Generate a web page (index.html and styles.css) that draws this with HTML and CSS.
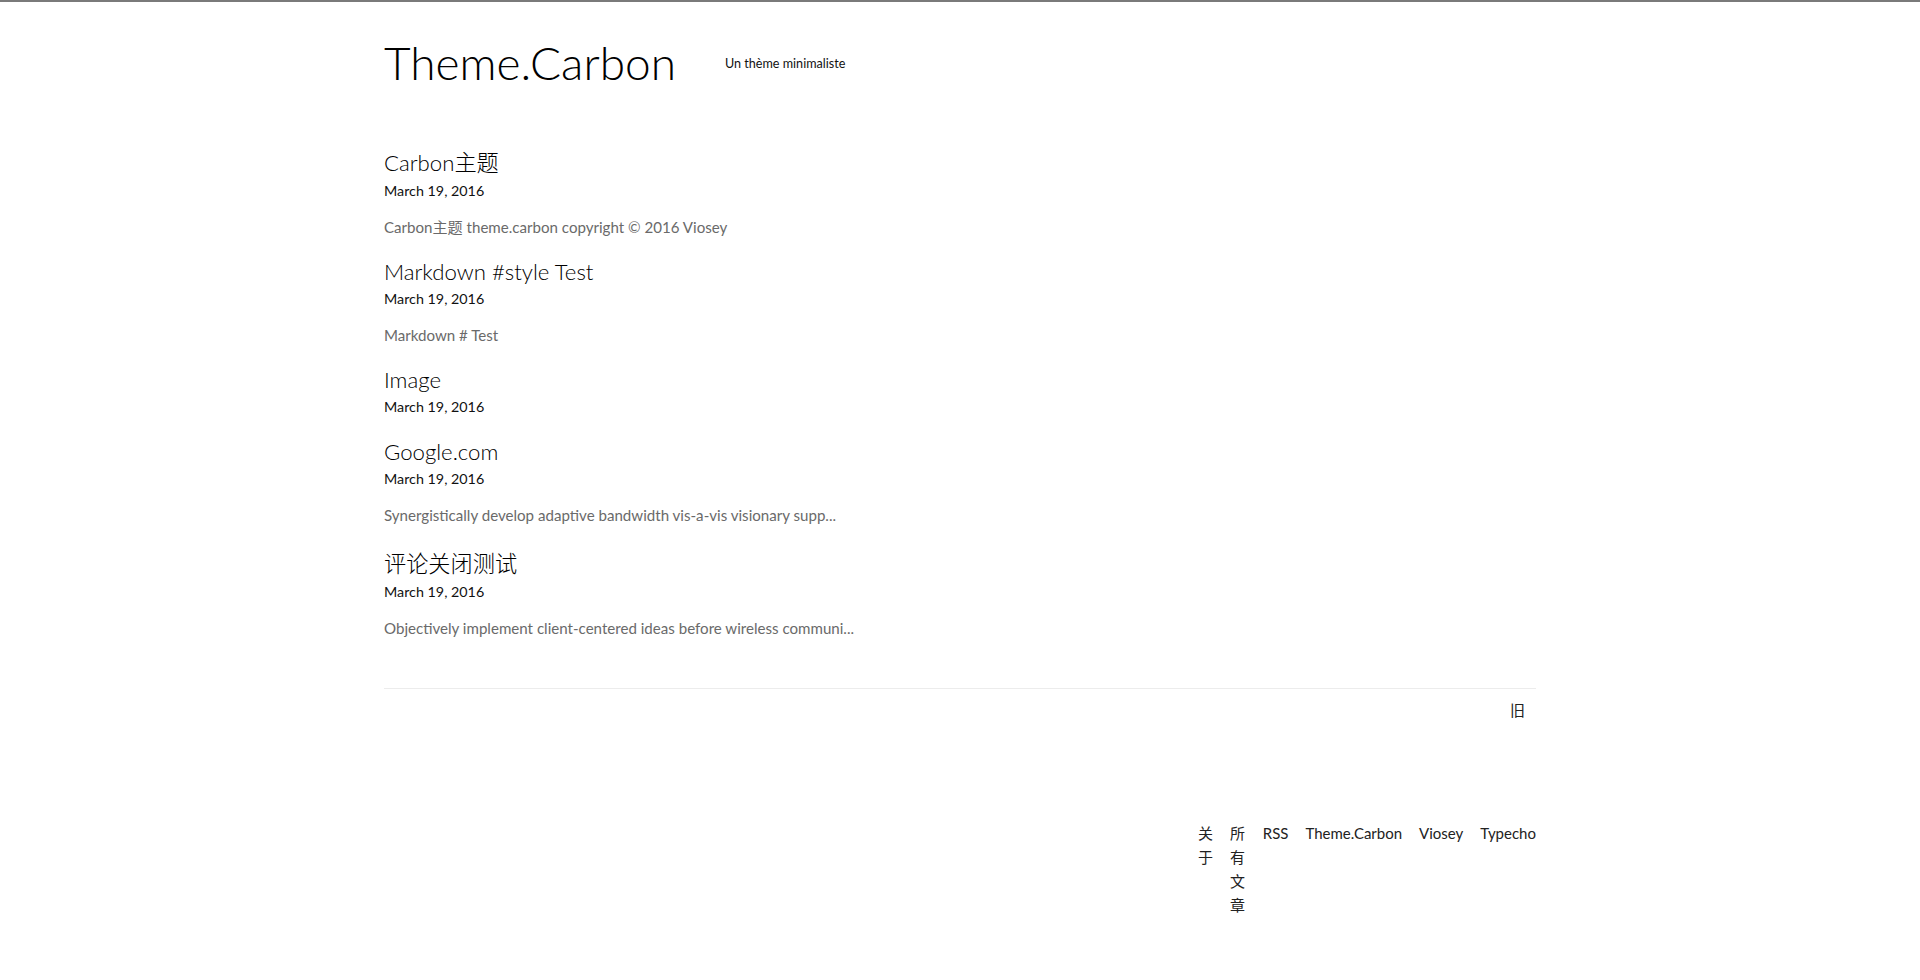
FILE: index.html
```html
<!DOCTYPE html>
<html lang="zh-CN">
<head>
    <meta charset="UTF-8">
    <meta name="viewport" content="width=device-width, initial-scale=1.0">
    <title>Theme.Carbon</title>
    <link rel="stylesheet" href="styles.css">
</head>
<body>

    <div class="container">
        <header class="site-header">
            <h1 class="site-title"><a href="#">Theme.Carbon</a></h1>
            <p class="site-desc">Un thème minimaliste</p>
        </header>

        <main class="post-list">
            <article class="post">
                <h2 class="post-title"><a href="#">Carbon主题</a></h2>
                <div class="post-date">March 19, 2016</div>
                <p class="post-excerpt">Carbon主题 theme.carbon copyright © 2016 Viosey</p>
            </article>
            <article class="post">
                <h2 class="post-title"><a href="#">Markdown #style Test</a></h2>
                <div class="post-date">March 19, 2016</div>
                <p class="post-excerpt">Markdown # Test</p>
            </article>
            <article class="post">
                <h2 class="post-title"><a href="#">Image</a></h2>
                <div class="post-date">March 19, 2016</div>
            </article>
            <article class="post">
                <h2 class="post-title"><a href="#">Google.com</a></h2>
                <div class="post-date">March 19, 2016</div>
                <p class="post-excerpt">Synergistically develop adaptive bandwidth vis-a-vis visionary supp...</p>
            </article>
            <article class="post">
                <h2 class="post-title"><a href="#">评论关闭测试</a></h2>
                <div class="post-date">March 19, 2016</div>
                <p class="post-excerpt">Objectively implement client-centered ideas before wireless communi...</p>
            </article>
        </main>

        <nav class="pager">
            <a href="#">旧</a>
        </nav>

        <footer class="site-footer">
            <ul class="footer-nav">
                <li><a href="#">关于</a></li>
                <li><a href="#">所有文章</a></li>
                <li><a href="#">RSS</a></li>
                <li><a href="#">Theme.Carbon</a></li>
                <li><a href="#">Viosey</a></li>
                <li><a href="#">Typecho</a></li>
            </ul>
        </footer>
    </div>

</body>
</html>
```

FILE: styles.css
```css
body {
    font-family: Lato, "Noto Sans CJK SC", sans-serif;
    margin: 0;
    padding: 0;
    background-color: #fff;
    color: #222;
    border-top: 2px solid #7a7a7a;
}
a {
    color: inherit;
    text-decoration: none;
}
.container {
    width: 1152px;
    margin: 0 auto;
}
.site-header {
    display: flex;
    align-items: center;
    padding-top: 32px;
    margin-bottom: 53px;
}
.site-title {
    margin: 0;
    font-size: 46px;
    line-height: 58px;
    font-weight: 300;
    color: #000;
}
.site-desc {
    margin: 2px 0 0 49px;
    font-size: 12.6px;
    line-height: 16px;
    color: #111;
}
.post {
    margin-bottom: 19px;
}
.post-title {
    margin: 0;
    font-size: 22.2px;
    line-height: normal;
    font-weight: 300;
    color: #000;
}
.post-date {
    margin-top: 2px;
    font-size: 14.3px;
    line-height: 24px;
    color: #111;
}
.post-excerpt {
    margin: 12px 0 0;
    font-size: 15.1px;
    line-height: 24px;
    color: #6a6a6a;
}
.pager {
    margin-top: 48px;
    border-top: 1px solid #ececec;
    padding: 9px 11px 0 0;
    text-align: right;
    font-size: 15px;
    line-height: 24px;
    color: #222;
}
.site-footer {
    display: flex;
    justify-content: flex-end;
    margin-top: 99px;
    padding-bottom: 40px;
}
.footer-nav {
    display: flex;
    justify-content: flex-end;
    gap: 17px;
    width: 338px;
    margin: 0;
    padding: 0;
    list-style: none;
    font-size: 15px;
    line-height: 24px;
    color: #222;
}
```
